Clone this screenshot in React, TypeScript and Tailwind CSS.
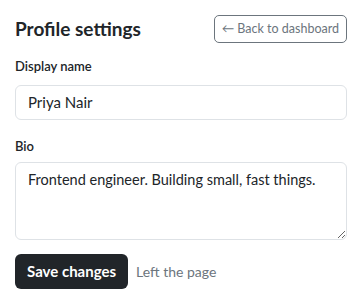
import React from "react";

export default function App() {
  return (
    <div className="min-h-screen bg-white px-[15px] pt-[15px] text-[#212529]" style={{ fontFamily: 'Lato, "Noto Sans", sans-serif' }}>
      <div className="flex items-center justify-between">
        <h1 className="text-[19px] font-bold leading-7">Profile settings</h1>
        <button className="h-7 rounded-[5px] border border-[#6c757d] px-[7px] text-[12.5px] text-[#6c757d]">
          ← Back to dashboard
        </button>
      </div>

      <label className="mt-[14px] block text-[13px] font-semibold">Display name</label>
      <input
        className="mt-[8px] block h-[35px] w-full rounded-[6px] border border-[#dee2e6] px-3 text-[15px] text-[#212529] outline-none"
        defaultValue="Priya Nair"
      />

      <label className="mt-[17px] block text-[13px] font-semibold">Bio</label>
      <textarea
        className="mt-[6px] block h-[78px] w-full rounded-[6px] border border-[#dee2e6] px-3 py-[6px] text-[14.5px] text-[#212529] outline-none"
        defaultValue="Frontend engineer. Building small, fast things."
      />

      <div className="mt-[14px] flex items-center gap-2">
        <button className="h-[35px] rounded-[6px] bg-[#212529] px-3 text-[15px] font-bold text-white">
          Save changes
        </button>
        <span className="text-[14px] text-[#6c757d]">Left the page</span>
      </div>
    </div>
  );
}
